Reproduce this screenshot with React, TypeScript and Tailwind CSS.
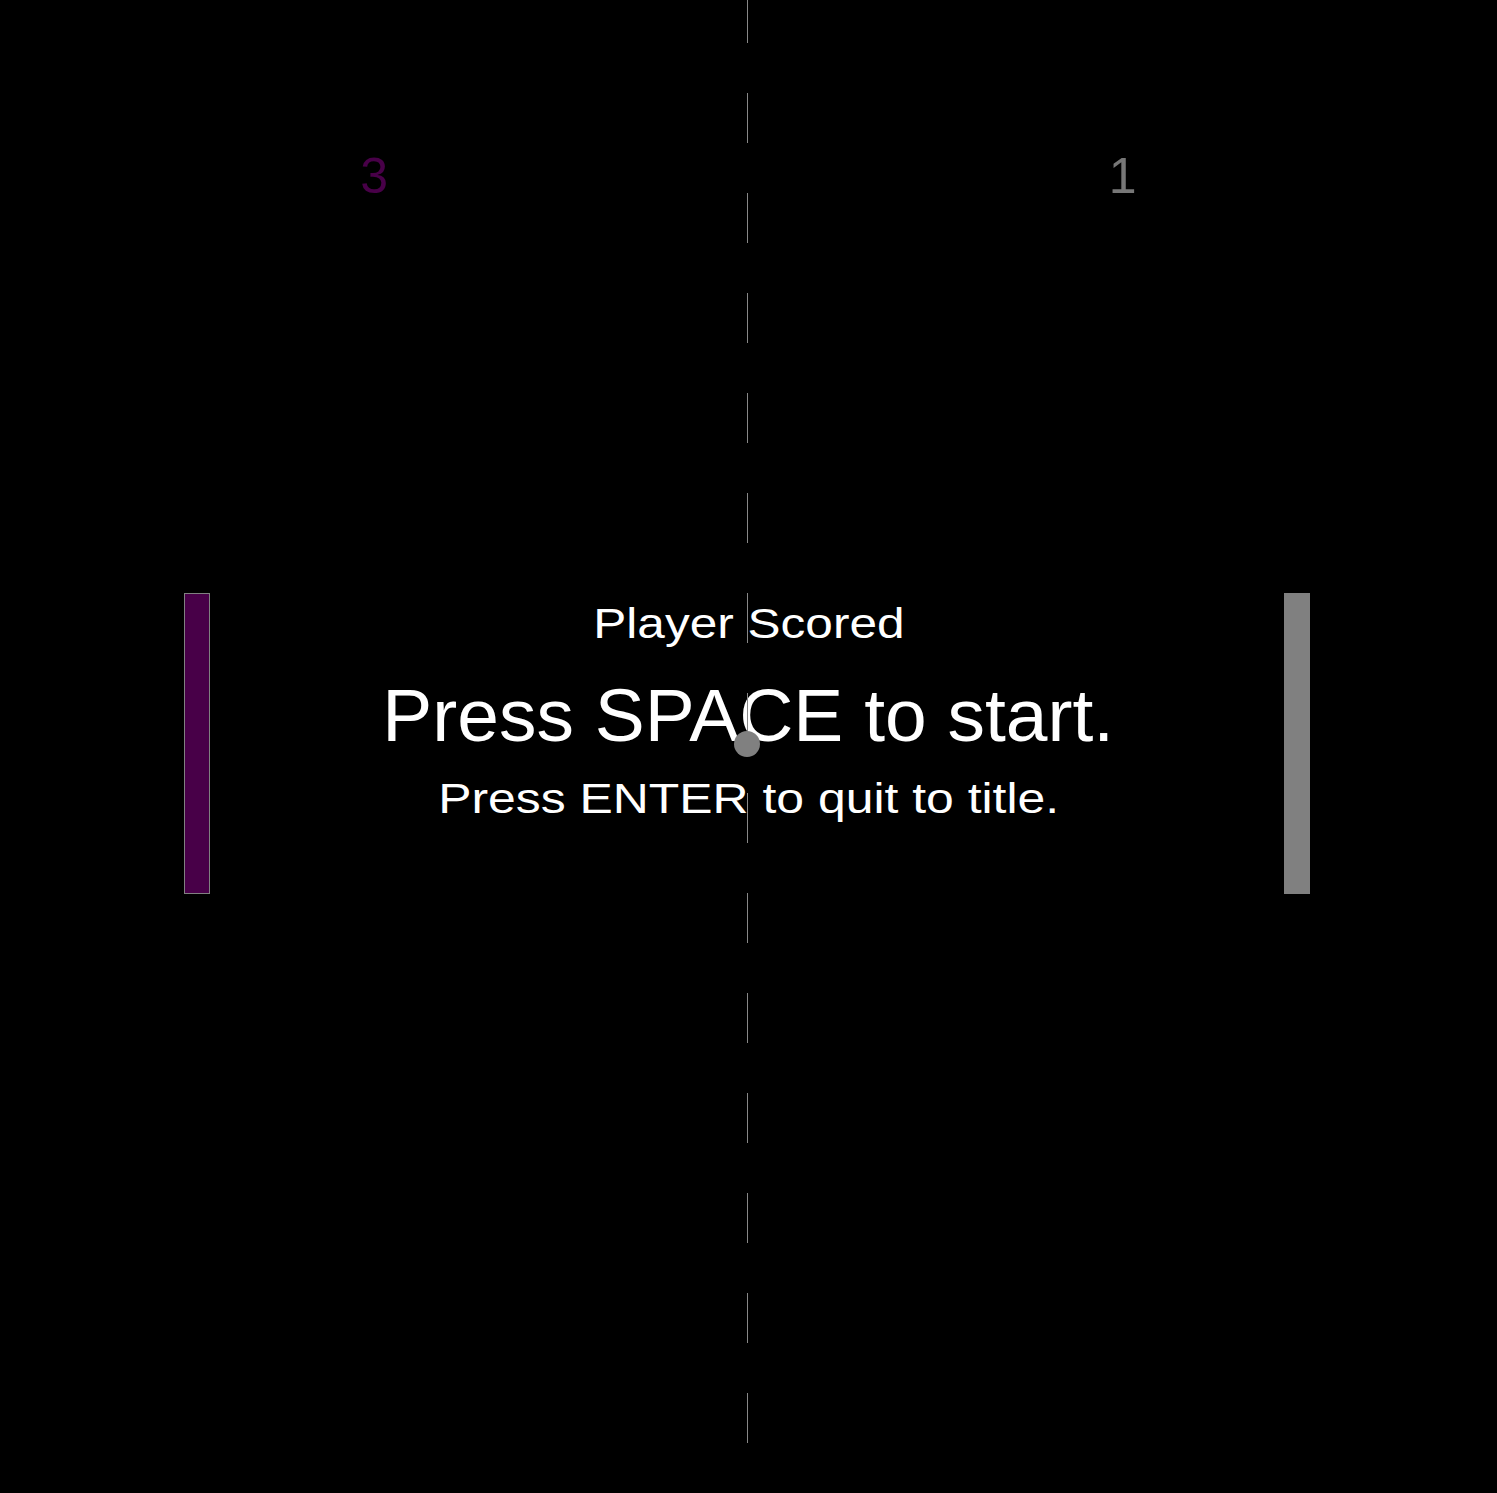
import React from "react";

const dashes = Array.from({ length: 15 }, (_, i) => i);

const App: React.FC = () => {
  return (
    <div className="relative w-[1497px] h-[1493px] bg-black overflow-hidden font-['Liberation_Sans',Arial,sans-serif]">
      {/* scores */}
      <div className="grid grid-cols-2 pt-[151px] text-[50px] leading-none text-center">
        <div className="text-[#480048]">3</div>
        <div className="text-[#777777]">1</div>
      </div>

      {/* paddles */}
      <div className="absolute inset-x-0 top-[593px] flex justify-between pl-[184px] pr-[187px]">
        <div className="w-[26px] h-[301px] bg-[#480048] border border-[#808080]" />
        <div className="w-[26px] h-[301px] bg-[#808080]" />
      </div>

      {/* messages */}
      <div className="absolute inset-x-0 top-[603px] flex flex-col items-center text-white leading-none">
        <div className="text-[42px] scale-x-[1.18]">Player Scored</div>
        <div className="mt-[34px] text-[74px] scale-x-[1.013]">Press SPACE to start.</div>
        <div className="mt-[24px] text-[43px] scale-x-[1.16]">Press ENTER to quit to title.</div>
      </div>

      {/* net */}
      <div className="absolute left-[747px] top-[-7px] w-px flex flex-col gap-[50px]">
        {dashes.map((i) => (
          <div key={i} className="w-px h-[50px] bg-[#888888]" />
        ))}
      </div>

      {/* ball */}
      <div className="absolute left-[734px] top-[731px] w-[26px] h-[26px] rounded-full bg-[#808080]" />
    </div>
  );
};

export default App;
